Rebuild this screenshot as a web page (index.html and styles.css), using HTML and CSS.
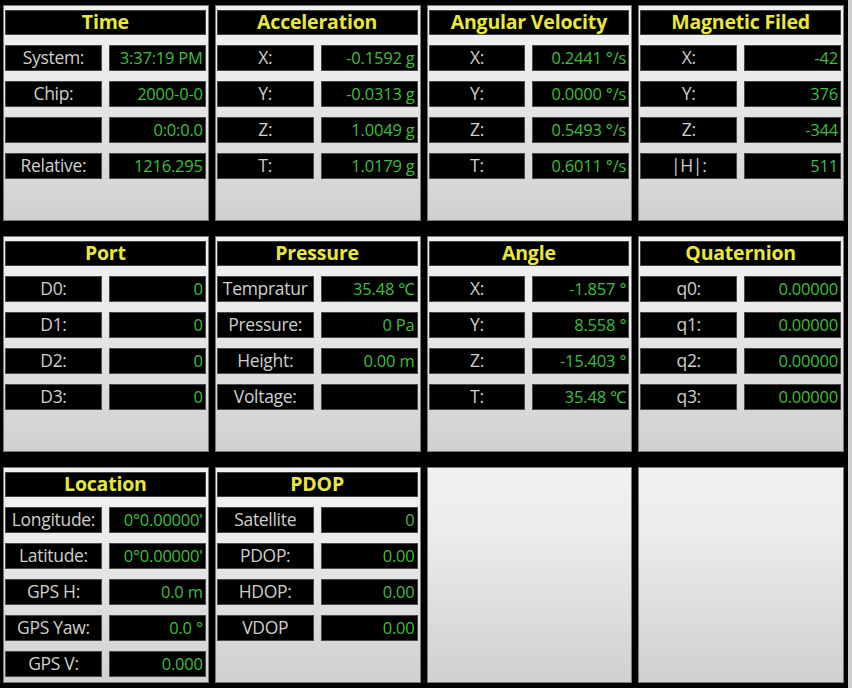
FILE: index.html
```html
<html>
<head>
    <meta charset="UTF-8">
    <title>Sensor Data</title>
    <link rel="stylesheet" href="styles.css">
</head>
<body>
<div class="board">
    <div class="panel">
        <div class="head">Time</div>
        <div class="row"><div class="label">System:</div><div class="value">3:37:19 PM</div></div>
        <div class="row"><div class="label">Chip:</div><div class="value">2000-0-0</div></div>
        <div class="row"><div class="label"></div><div class="value">0:0:0.0</div></div>
        <div class="row"><div class="label">Relative:</div><div class="value">1216.295</div></div>
    </div>
    <div class="panel">
        <div class="head">Acceleration</div>
        <div class="row"><div class="label">X:</div><div class="value">-0.1592 g</div></div>
        <div class="row"><div class="label">Y:</div><div class="value">-0.0313 g</div></div>
        <div class="row"><div class="label">Z:</div><div class="value">1.0049 g</div></div>
        <div class="row"><div class="label">T:</div><div class="value">1.0179 g</div></div>
    </div>
    <div class="panel">
        <div class="head">Angular Velocity</div>
        <div class="row"><div class="label">X:</div><div class="value">0.2441 °/s</div></div>
        <div class="row"><div class="label">Y:</div><div class="value">0.0000 °/s</div></div>
        <div class="row"><div class="label">Z:</div><div class="value">0.5493 °/s</div></div>
        <div class="row"><div class="label">T:</div><div class="value">0.6011 °/s</div></div>
    </div>
    <div class="panel">
        <div class="head">Magnetic Filed</div>
        <div class="row"><div class="label">X:</div><div class="value">-42</div></div>
        <div class="row"><div class="label">Y:</div><div class="value">376</div></div>
        <div class="row"><div class="label">Z:</div><div class="value">-344</div></div>
        <div class="row"><div class="label">|H|:</div><div class="value">511</div></div>
    </div>

    <div class="panel">
        <div class="head">Port</div>
        <div class="row"><div class="label">D0:</div><div class="value">0</div></div>
        <div class="row"><div class="label">D1:</div><div class="value">0</div></div>
        <div class="row"><div class="label">D2:</div><div class="value">0</div></div>
        <div class="row"><div class="label">D3:</div><div class="value">0</div></div>
    </div>
    <div class="panel">
        <div class="head">Pressure</div>
        <div class="row"><div class="label">Tempratur</div><div class="value">35.48 ℃</div></div>
        <div class="row"><div class="label">Pressure:</div><div class="value">0 Pa</div></div>
        <div class="row"><div class="label">Height:</div><div class="value">0.00 m</div></div>
        <div class="row"><div class="label">Voltage:</div><div class="value"></div></div>
    </div>
    <div class="panel">
        <div class="head">Angle</div>
        <div class="row"><div class="label">X:</div><div class="value">-1.857 °</div></div>
        <div class="row"><div class="label">Y:</div><div class="value">8.558 °</div></div>
        <div class="row"><div class="label">Z:</div><div class="value">-15.403 °</div></div>
        <div class="row"><div class="label">T:</div><div class="value">35.48 ℃</div></div>
    </div>
    <div class="panel">
        <div class="head">Quaternion</div>
        <div class="row"><div class="label">q0:</div><div class="value">0.00000</div></div>
        <div class="row"><div class="label">q1:</div><div class="value">0.00000</div></div>
        <div class="row"><div class="label">q2:</div><div class="value">0.00000</div></div>
        <div class="row"><div class="label">q3:</div><div class="value">0.00000</div></div>
    </div>

    <div class="panel">
        <div class="head">Location</div>
        <div class="row"><div class="label">Longitude:</div><div class="value">0°0.00000'</div></div>
        <div class="row"><div class="label">Latitude:</div><div class="value">0°0.00000'</div></div>
        <div class="row"><div class="label">GPS H:</div><div class="value">0.0 m</div></div>
        <div class="row"><div class="label">GPS Yaw:</div><div class="value">0.0 °</div></div>
        <div class="row"><div class="label">GPS V:</div><div class="value">0.000</div></div>
    </div>
    <div class="panel">
        <div class="head">PDOP</div>
        <div class="row"><div class="label">Satellite</div><div class="value">0</div></div>
        <div class="row"><div class="label">PDOP:</div><div class="value">0.00</div></div>
        <div class="row"><div class="label">HDOP:</div><div class="value">0.00</div></div>
        <div class="row"><div class="label">VDOP</div><div class="value">0.00</div></div>
    </div>
    <div class="panel"></div>
    <div class="panel"></div>
</div>
</body>
</html>
```

FILE: styles.css
```css
* {
    padding: 0;
    margin: 0;
    box-sizing: border-box;
}

body {
    width: 852px;
    height: 688px;
    overflow: hidden;
    background: linear-gradient(to right, #000 848px, #cfcfcf 848px);
    font-family: "Open Sans", "Noto Sans", sans-serif;
}

.board {
    width: 848px;
    padding: 5px 4px 0 3px;
    display: grid;
    grid-template-columns: repeat(4, 1fr);
    grid-template-rows: repeat(3, 216px);
    column-gap: 6px;
    row-gap: 15px;
}

.panel {
    border: 1px solid #7a7a7a;
    background: linear-gradient(to bottom, #f1f1f1 0%, #ececec 30%, #d0d0d0 100%);
    padding: 4px 2px 0 1px;
    display: flex;
    flex-direction: column;
    gap: 10px;
}

.head {
    height: 25px;
    background: #000;
    border: 1px solid #444;
    color: #e8e83a;
    font-weight: bold;
    font-size: 19.5px;
    line-height: 22px;
    text-align: center;
    letter-spacing: -0.2px;
}

.row {
    display: grid;
    grid-template-columns: 1fr 1fr;
    column-gap: 7px;
    height: 26px;
}

.label, .value {
    background: #000;
    border: 1px solid #4a4a4a;
    line-height: 23px;
    white-space: nowrap;
    overflow: hidden;
}

.label {
    color: #cfcfcf;
    text-align: center;
    font-size: 17.5px;
    letter-spacing: -0.3px;
}

.value {
    color: #3dbf3d;
    text-align: right;
    padding-right: 2px;
    font-size: 16.5px;
    letter-spacing: -0.2px;
}
```
